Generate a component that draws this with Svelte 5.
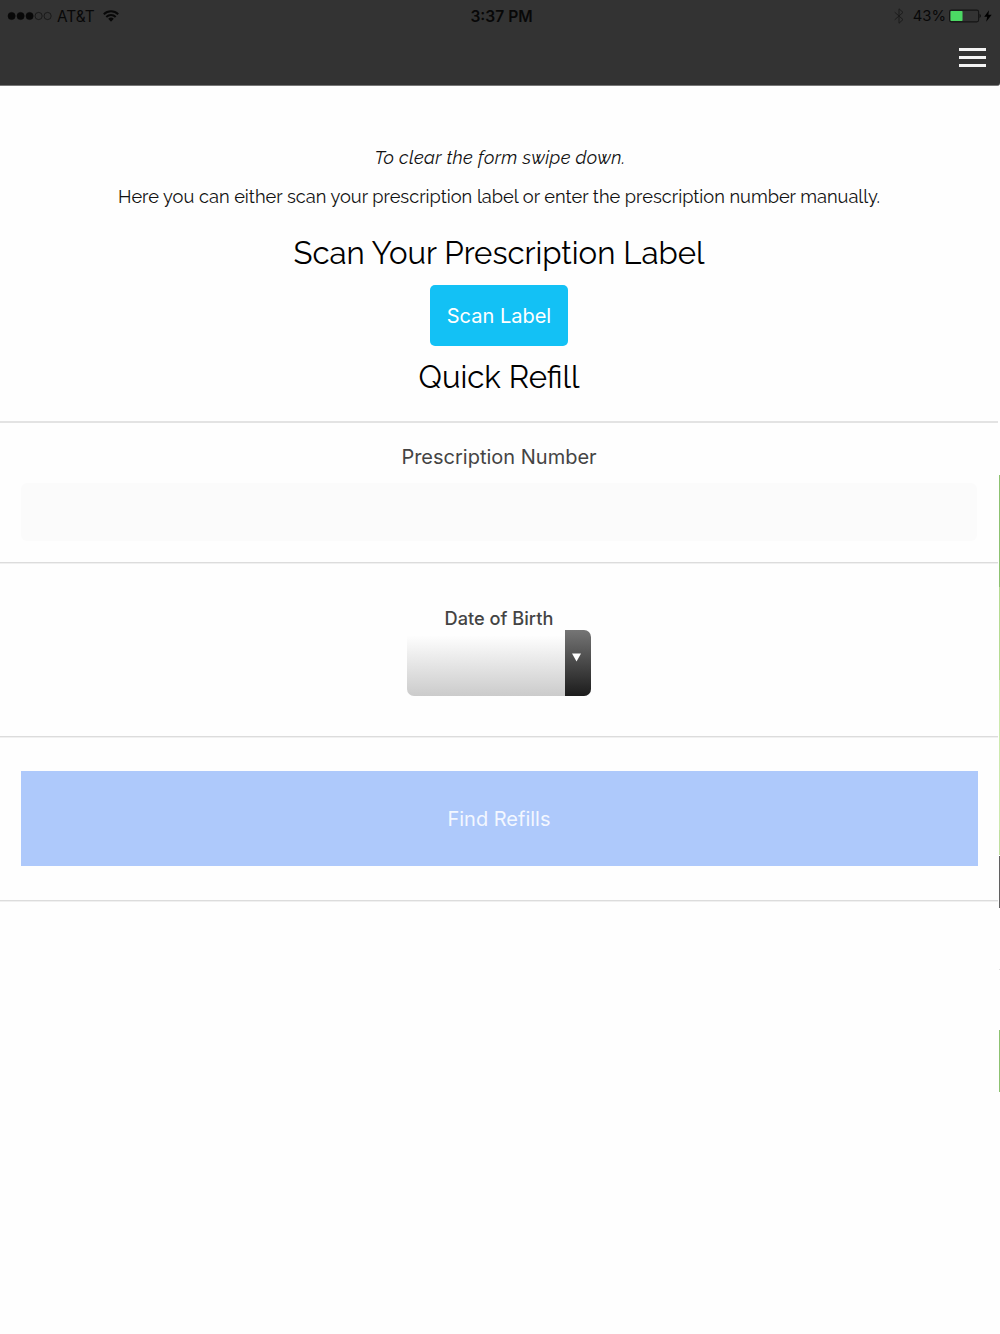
<script lang="ts">
    const carrier = "AT&T";
    const time = "3:37 PM";
    const battery = 43;
    const signal = 3;

    let prescriptionNumber = "";

    // slices of the page that waits behind the right edge
    const slices = [
        { top: 475, height: 112, color: "#8cc270" },
        { top: 587, height: 93, color: "#b5dc92" },
        { top: 680, height: 150, color: "#cdeaae" },
        { top: 830, height: 25, color: "#bfdf9f" },
        { top: 856, height: 52, color: "#606060" },
        { top: 969, height: 1, color: "#dddddd" },
        { top: 1030, height: 62, color: "#8cc270" },
    ];
</script>

<div class="screen">
    <header>
        <div class="status-bar">
            <div class="status-left">
                <svg class="signal" width="46" height="12" viewBox="0 0 46 12">
                    {#each [0, 1, 2, 3, 4] as dot}
                        <circle cx={4.6 + dot * 9} cy="6" r="3.6" class:filled={dot < signal} />
                    {/each}
                </svg>
                <span class="carrier">{carrier}</span>
                <svg class="wifi" width="16" height="12" viewBox="0 0 16 12">
                    <path d="M.8 4.3a10.3 10.3 0 0 1 14.4 0M3.3 7a6.7 6.7 0 0 1 9.4 0" />
                    <path class="fan" d="M5.2 8.8a4 4 0 0 1 5.6 0L8 11.7z" />
                </svg>
            </div>
            <span class="time">{time}</span>
            <div class="status-right">
                <svg class="bluetooth" width="10" height="16" viewBox="0 0 10 16">
                    <path d="M.7 4.2l8.3 7.4L5 15.2V.8l4 3.6-8.3 7.4" />
                </svg>
                <span class="percent">{battery}%</span>
                <svg class="battery" width="33" height="14" viewBox="0 0 33 14">
                    <rect class="shell" x=".6" y="1.1" width="29" height="11.8" rx="1.8" />
                    <rect class="charge" x="1.5" y="2" width={battery * 0.28} height="10" rx=".7" />
                    <path d="M30.7 4.8q2 2.2 0 4.4z" />
                </svg>
                <svg class="bolt" width="8" height="12" viewBox="0 0 8 12">
                    <path d="M5 .3L.2 6.8h3L2.2 11.8 7.7 4.8H4.4z" />
                </svg>
            </div>
        </div>
        <div class="nav-bar">
            <button class="menu" aria-label="Menu">
                <span></span>
                <span></span>
                <span></span>
            </button>
        </div>
    </header>

    <main>
        <section class="intro">
            <p class="hint">To clear the form swipe down.</p>
            <p class="about">Here you can either scan your prescription label or enter the prescription number manually.</p>
            <h2 class="scan-title">Scan Your Prescription Label</h2>
            <button class="scan">Scan Label</button>
            <h2 class="refill-title">Quick Refill</h2>
        </section>
        <section class="number">
            <label for="rx">Prescription Number</label>
            <input id="rx" type="text" bind:value={prescriptionNumber} />
        </section>
        <section class="birth">
            <span class="birth-label">Date of Birth</span>
            <button class="picker" aria-label="Date of Birth">
                <span class="picker-value"></span>
                <span class="picker-arrow">
                    <svg width="9" height="9" viewBox="0 0 9 9"><path d="M0 .5h9L4.5 8.5z" /></svg>
                </span>
            </button>
        </section>
        <section class="submit">
            <button class="find">Find Refills</button>
        </section>
    </main>

    {#each slices as slice}
        <i class="slice" style="top: {slice.top}px; height: {slice.height}px; background: {slice.color}"></i>
    {/each}
</div>

<style>
    :global(body) {
        background: #fff;
    }

    .screen {
        position: relative;
        width: 1000px;
        height: 1334px;
        overflow: hidden;
        background: #fefefe;
        font-family: Inter, "Liberation Sans", sans-serif;
        color: #111;
    }

    button {
        border: 0;
        padding: 0;
        font-family: inherit;
    }

    header {
        height: 85px;
        background: #333;
        border-bottom: 1px solid #777;
        border-bottom-right-radius: 3px;
    }

    .status-bar {
        display: grid;
        grid-template-columns: 1fr auto 1fr;
        align-items: center;
        height: 31px;
        padding: 0 8px 0 7px;
        font-size: 15px;
        color: #080808;
    }

    .status-left,
    .status-right {
        display: flex;
        align-items: center;
        height: 32px;
    }

    .status-right {
        justify-content: flex-end;
    }

    .signal circle {
        fill: none;
        stroke: #080808;
        stroke-width: .6;
    }

    .signal .filled {
        fill: #080808;
    }

    .carrier {
        margin: 0 8px 0 4px;
        font-size: 15.4px;
    }

    .wifi {
        fill: none;
        stroke: #080808;
        stroke-width: 2;
    }

    .wifi .fan {
        fill: #080808;
        stroke: none;
    }

    .time {
        padding-left: 4px;
        font-size: 15.6px;
        font-weight: 600;
    }

    .bluetooth {
        margin-right: 9px;
        fill: none;
        stroke: #1c1c1c;
        stroke-width: 1;
    }

    .percent {
        margin-right: 3px;
        font-size: 14.8px;
    }

    .battery {
        margin-right: 2px;
    }

    .battery .shell {
        fill: none;
        stroke: #151515;
        stroke-width: 1.1;
    }

    .battery .charge {
        fill: #4cd964;
    }

    .nav-bar {
        display: flex;
        justify-content: flex-end;
        padding: 17px 14px 0 0;
    }

    .menu {
        display: flex;
        flex-direction: column;
        gap: 5px;
        width: 27px;
        background: none;
    }

    .menu span {
        height: 3px;
        background: #f4f4f4;
    }

    main {
        width: 998px;
        text-align: center;
    }

    section {
        display: flex;
        flex-direction: column;
        align-items: center;
        box-sizing: border-box;
        border-bottom: 2px solid #e3e3e3;
    }

    .intro {
        height: 337px;
        padding-top: 60px;
        font-family: Raleway, Lato, sans-serif;
    }

    .intro p {
        margin: 0;
        font-size: 18.24px;
        line-height: 24px;
        white-space: nowrap;
    }

    .intro .hint {
        padding-left: 2px;
        font-style: italic;
        letter-spacing: .32px;
    }

    .intro .about {
        margin-top: 15px;
    }

    h2 {
        margin: 0;
        font-size: 31.2px;
        font-weight: 400;
        line-height: 40px;
        color: #000;
        white-space: nowrap;
    }

    .scan-title {
        margin-top: 24px;
    }

    .scan {
        width: 138px;
        height: 61px;
        margin-top: 12px;
        flex-shrink: 0;
        border-radius: 5px;
        background: #13c1f5;
        color: #fff;
        font: 20px Inter, sans-serif;
    }

    .refill-title {
        margin-top: 11px;
    }

    .number {
        height: 140px;
        padding: 20px 21px 0 21px;
    }

    .number label {
        font-size: 20px;
        line-height: 28px;
        color: #444;
    }

    .number input {
        width: 100%;
        height: 58px;
        margin-top: 12px;
        box-sizing: border-box;
        border: 0;
        border-radius: 6px;
        background: #fbfbfb;
    }

    .number,
    .birth,
    .submit {
        border-bottom: 1px solid #dcdcdc;
        box-shadow: 0 1px #f0f0f0;
    }

    .birth {
        height: 174px;
        padding-top: 43px;
    }

    .birth-label {
        font-size: 18.2px;
        font-weight: 500;
        line-height: 24px;
        color: #444;
    }

    .picker {
        display: flex;
        width: 184px;
        height: 66px;
        overflow: hidden;
        border-radius: 7px;
        background: linear-gradient(#fefefe 8%, #cbcbcb);
    }

    .picker-value {
        flex: 1;
    }

    .picker-arrow {
        display: flex;
        justify-content: center;
        width: 26px;
        height: 100%;
        padding-top: 23px;
        padding-right: 3px;
        box-sizing: border-box;
        background: linear-gradient(#757575, #1c1c1c);
    }

    .picker-arrow path {
        fill: #fff;
    }

    .submit {
        height: 164px;
        padding: 34px 21px 0 21px;
    }

    .find {
        width: 957px;
        height: 95px;
        background: #aec9fb;
        color: #f3f7ff;
        font-size: 20px;
    }

    .slice {
        position: absolute;
        right: 0;
        width: 1px;
    }
</style>
